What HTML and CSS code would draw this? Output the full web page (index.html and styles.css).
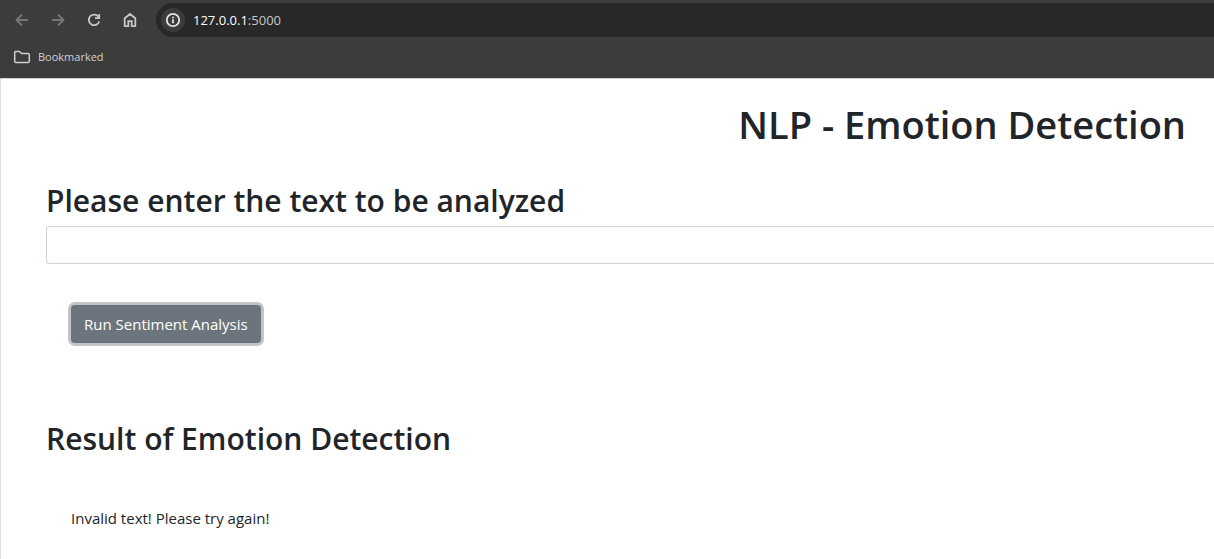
FILE: index.html
```html
<!DOCTYPE html>
<html lang="en">
<head>
<meta charset="utf-8">
<meta name="viewport" content="width=device-width, initial-scale=1">
<title>NLP - Emotion Detection</title>
<link rel="stylesheet" href="styles.css">
</head>
<body>
<header class="browser">
  <div class="toolbar">
    <nav class="nav" aria-label="Browser navigation">
      <button class="icon-button dim" type="button" aria-label="Back"><svg viewBox="0 0 16 16"><path class="bold" d="M14 8H3M8 2.500L2.500 8L8 13.500"/></svg></button>
      <button class="icon-button dim" type="button" aria-label="Forward"><svg viewBox="0 0 16 16"><path class="bold" d="M2 8H13M8 2.500L13.500 8L8 13.500"/></svg></button>
      <button class="icon-button" type="button" aria-label="Reload"><svg viewBox="0 0 16 16"><path class="bold" d="M12.600 5A5.300 5.300 0 1 0 13.200 9.400"/><path class="bold" d="M13.200 2V6.200H9"/></svg></button>
      <button class="icon-button" type="button" aria-label="Home"><svg viewBox="0 0 16 16"><path class="bold" d="M2.700 6.300L8 2L13.300 6.300V14.200H9.700V9.200H6.300V14.200H2.700Z"/></svg></button>
    </nav>
    <div class="address">
      <button class="site-info" type="button" aria-label="Site information"><svg viewBox="0 0 16 16"><circle class="bold" cx="8" cy="8" r="6.200"/><path class="bold" d="M8 7.200V11.200M8 4.700V6.200"/></svg></button>
      <span class="url">127.0.0.1<span class="port">:5000</span></span>
    </div>
  </div>
  <div class="bookmarks">
    <button class="bookmark" type="button"><svg viewBox="0 0 18 14"><path d="M2.500 1.500H6.500L8.500 3.500H15Q16.300 3.500 16.300 4.800V11.200Q16.300 12.500 15 12.500H3Q1.700 12.500 1.700 11.200V2.500Q1.700 1.500 2.500 1.500Z"/></svg>Bookmarked</button>
  </div>
</header>
<main class="page">
  <h1 class="title">NLP - Emotion Detection</h1>
  <form class="form">
    <label class="heading" for="text">Please enter the text to be analyzed</label>
    <input class="text-input" id="text" type="text">
    <button class="run-button" type="button">Run Sentiment Analysis</button>
  </form>
  <section class="result">
    <h2 class="heading">Result of Emotion Detection</h2>
    <p class="message">Invalid text! Please try again!</p>
  </section>
</main>
</body>
</html>
```
FILE: styles.css
```css
* {
  box-sizing: border-box;
}

body {
  display: flex;
  flex-direction: column;
  min-height: 100vh;
  margin: 0;
  overflow-x: hidden;
  background: #fff;
  color: #212529;
  font: 400 15px/24px "Open Sans", "Noto Sans", sans-serif;
}

button {
  padding: 0;
  border: 0;
  background: none;
  font: inherit;
}

svg {
  display: block;
  width: 16px;
  height: 16px;
  fill: none;
  stroke: currentColor;
  stroke-width: 1.500;
}

.bold {
  stroke-width: 1.800;
}

.browser {
  padding-top: 3px;
  border-bottom: 1px solid #d0d0d0;
  background: #3c3c3c;
  color: #c7c7c7;
}

.toolbar {
  display: flex;
  gap: 18px;
  padding-left: 14px;
}

.nav {
  display: flex;
  align-items: center;
  gap: 20px;
}

.icon-button {
  color: #c7c7c7;
}

.dim {
  color: #777;
}

.address {
  display: flex;
  flex: 1;
  align-items: center;
  gap: 8px;
  height: 34px;
  padding-left: 5px;
  border-radius: 17px 0 0 17px;
  background: #282828;
}

.site-info {
  padding: 4px;
  border-radius: 50%;
  background: #3c3c3c;
  color: #e3e3e3;
}

.url {
  color: #fff;
  font-size: 13px;
}

.port {
  color: #c7c7c7;
}

.bookmarks {
  display: flex;
  height: 41px;
  padding: 0 13px 2px;
}

.bookmark {
  display: flex;
  align-items: center;
  gap: 7px;
  color: #d0d0d0;
  font-size: 11px;
}

.bookmark svg {
  width: 18px;
  height: 14px;
}

.page {
  flex: 1;
  padding: 21px 0 0 45px;
  border-left: 1px solid #dcdcdc;
}

.title {
  margin: 0;
  padding-right: 28px;
  font-size: 38px;
  font-weight: 600;
  line-height: 48px;
  text-align: right;
}

.form {
  display: flex;
  flex-direction: column;
  align-items: flex-start;
  margin-top: 33px;
}

.heading {
  margin: 0;
  font-size: 30px;
  font-weight: 600;
  line-height: 40px;
}

.text-input {
  width: 100%;
  height: 38px;
  margin-top: 5px;
  padding: 6px 12px;
  border: 1px solid #ced4da;
  border-right: 0;
  border-radius: 4px 0 0 4px;
  font: inherit;
  outline: 0;
}

.run-button {
  margin: 41px 0 0 25px;
  padding: 7px 13px;
  border-radius: 4px;
  background: #6c757d;
  box-shadow: 0 0 0 3px #c1c4c8;
  color: #fff;
}

.result {
  margin-top: 76px;
}

.message {
  margin: 47px 0 0 25px;
}
```
